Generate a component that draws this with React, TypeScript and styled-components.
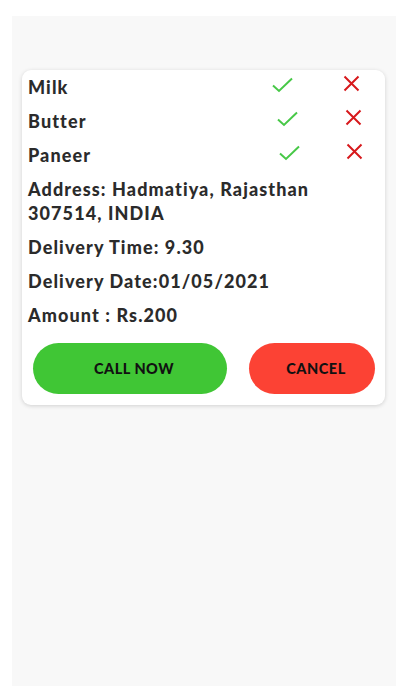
import React from "react";
import styled, { createGlobalStyle } from "styled-components";

const Global = createGlobalStyle`
  html, body { margin: 0; padding: 0; background: #ffffff; }
  body { font-family: Lato, "Open Sans", sans-serif; }
`;

const Panel = styled.div`
  margin: 16px 16px 0 12px;
  width: 384px;
  min-height: 670px;
  box-sizing: border-box;
  background: #f8f8f8;
  padding: 54px 11px 0 10px;
`;

const Card = styled.div`
  background: #ffffff;
  border-radius: 9px;
  box-shadow: 0 1px 4px rgba(0, 0, 0, 0.16);
  padding: 0 10px 11px 6px;
`;

const Row = styled.div`
  display: flex;
  align-items: center;
  height: 34px;
`;

const Label = styled.div`
  flex: 1;
  font-size: 18px;
  font-weight: 900;
  color: #2b2b2b;
  line-height: 34px;
  letter-spacing: 1.1px;
`;

const IconCell = styled.div<{ $left: number }>`
  position: relative;
  width: 0;
  height: 34px;
  svg { position: absolute; left: ${(p) => p.$left}px; }
`;

const Address = styled.div`
  padding: 5px 0;
  font-size: 18px;
  font-weight: 900;
  color: #2b2b2b;
  line-height: 24px;
  letter-spacing: 1.1px;
`;

const Buttons = styled.div`
  display: flex;
  gap: 22px;
  margin: 11px 0 0 5px;
`;

const Btn = styled.button<{ $bg: string; $w: number }>`
  width: ${(p) => p.$w}px;
  height: 51px;
  border: none;
  border-radius: 26px;
  background: ${(p) => p.$bg};
  color: #111;
  font-family: Lato, sans-serif;
  font-weight: 900;
  font-size: 14.5px;
  padding: 0 0 0 8px;
  letter-spacing: 0.5px;
`;

const Check = () => (
  <svg width="22" height="16" viewBox="0 0 22 16" style={{ top: 7 }}>
    <path d="M1 8.5 L7 14 L20 1.5" fill="none" stroke="#47c847" strokeWidth="2" />
  </svg>
);

const Cross = () => (
  <svg width="17" height="17" viewBox="0 0 17 17" style={{ top: 5 }}>
    <path d="M1.5 1.5 L15.5 15.5 M15.5 1.5 L1.5 15.5" fill="none" stroke="#d7191c" strokeWidth="2" />
  </svg>
);

const items = [
  { name: "Milk", check: 244, cross: 315 },
  { name: "Butter", check: 249, cross: 317 },
  { name: "Paneer", check: 251, cross: 318 },
];

export default function App() {
  return (
    <>
      <Global />
      <Panel>
        <Card>
          {items.map((it) => (
            <Row key={it.name}>
              <IconCell $left={it.check}>
                <Check />
              </IconCell>
              <IconCell $left={it.cross}>
                <Cross />
              </IconCell>
              <Label>{it.name}</Label>
            </Row>
          ))}
          <Address>
            Address: Hadmatiya, Rajasthan
            <br />
            307514, INDIA
          </Address>
          <Row>
            <Label>Delivery Time: 9.30</Label>
          </Row>
          <Row>
            <Label>Delivery Date:01/05/2021</Label>
          </Row>
          <Row>
            <Label>Amount : Rs.200</Label>
          </Row>
          <Buttons>
            <Btn $bg="#40c635" $w={194}>CALL NOW</Btn>
            <Btn $bg="#fc4234" $w={126}>CANCEL</Btn>
          </Buttons>
        </Card>
      </Panel>
    </>
  );
}
